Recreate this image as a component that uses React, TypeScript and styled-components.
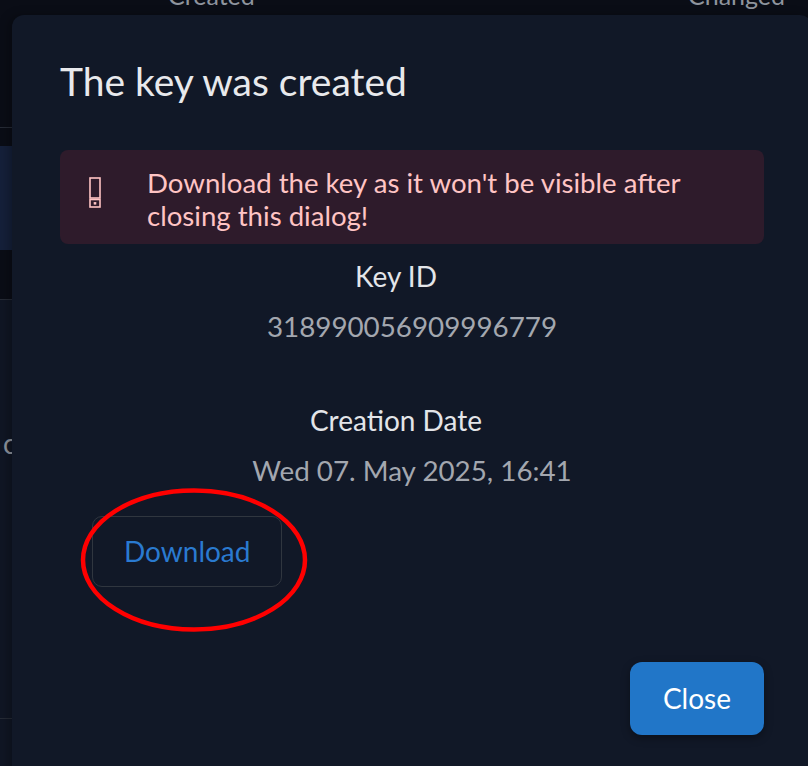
import React from 'react';
import styled, { createGlobalStyle } from 'styled-components';

const GlobalStyle = createGlobalStyle`
  html, body {
    margin: 0;
    padding: 0;
    background: #0a0d16;
    font-family: Lato, "Open Sans", "Liberation Sans", sans-serif;
  }
`;

const rows = [
  { height: 18, bg: '#0a0d16', line: false },
  { height: 104, bg: '#15203a', text: 'Selected', align: 'end' as const },
  { height: 50, bg: '#0a0d16', line: true },
  { height: 419, bg: '#101624', text: 'c', align: 'start' as const, line: true },
  { height: 120, bg: '#101624', text: 'o', align: 'start' as const },
];

const App: React.FC = () => {
  return (
    <>
      <GlobalStyle />
      <Page>
        <Table>
          <HeaderRow>
            <span />
            <HeaderCell>Created</HeaderCell>
            <HeaderCell>Changed</HeaderCell>
          </HeaderRow>
          {rows.map((r, i) => (
            <Row key={i} $height={r.height} $bg={r.bg} $line={!!r.line} $align={r.align}>
              {r.text && <RowText $strong={r.align === 'end'}>{r.text}</RowText>}
            </Row>
          ))}
        </Table>

        <Dialog role="dialog" aria-labelledby="dlg-title">
          <Title id="dlg-title">The key was created</Title>

          <Alert>
            <AlertIcon>
              <svg width="12" height="31" viewBox="0 0 12 31" fill="none" stroke="#ffc4c4" strokeWidth="1.6">
                <rect x="1" y="1" width="10" height="20" />
                <rect x="1" y="22.5" width="10" height="7.5" />
                <rect x="5" y="25.3" width="2" height="1.9" fill="#ffc4c4" strokeWidth="0.6" />
              </svg>
            </AlertIcon>
            <AlertText>Download the key as it won't be visible after closing this dialog!</AlertText>
          </Alert>

          <Details>
            <Label $first>Key ID</Label>
            <Value>318990056909996779</Value>
            <Label>Creation Date</Label>
            <Value>Wed 07. May 2025, 16:41</Value>
          </Details>

          <DownloadArea>
            <DownloadButton type="button">Download</DownloadButton>
            <Annotation width="232" height="148" viewBox="0 0 232 148">
              <ellipse cx="114" cy="72" rx="111" ry="69.5" fill="none" stroke="#ff0000" strokeWidth="4.5" />
            </Annotation>
          </DownloadArea>

          <Footer>
            <CloseButton type="button">Close</CloseButton>
          </Footer>
        </Dialog>
      </Page>
    </>
  );
};

const Page = styled.div`
  position: relative;
  height: 766px;
  overflow: hidden;
  background: #0a0d16;
`;

const Table = styled.div`
  display: flex;
  flex-direction: column;
  margin-top: -34px;
`;

const HeaderRow = styled.div`
  display: grid;
  grid-template-columns: 168px 520px 1fr;
  height: 162px;
  padding-top: 14px;
  box-sizing: border-box;
  border-bottom: 1px solid #262b36;
  background: #0a0d16;
`;

const HeaderCell = styled.span`
  font-size: 25px;
  line-height: 1.2;
  color: #8e949e;
`;

const Row = styled.div<{ $height: number; $bg: string; $line: boolean; $align?: 'start' | 'end' }>`
  display: flex;
  justify-content: ${(p) => (p.$align === 'end' ? 'flex-end' : 'flex-start')};
  align-items: flex-start;
  width: ${(p) => (p.$align === 'end' ? '14px' : 'auto')};
  min-width: ${(p) => (p.$align === 'end' ? '100%' : '0')};
  height: ${(p) => p.$height}px;
  box-sizing: border-box;
  padding: ${(p) => (p.$align === 'end' ? '22px 0 0' : p.$align === 'start' ? '127px 0 0 3px' : '0')};
  background: ${(p) => p.$bg};
  border-bottom: ${(p) => (p.$line ? '1px solid #262b36' : 'none')};
  white-space: nowrap;
`;

const RowText = styled.span<{ $strong?: boolean }>`
  font-size: 28px;
  line-height: 1.2;
  color: ${(p) => (p.$strong ? '#c9ccd2' : '#8e949e')};
  margin-left: ${(p) => (p.$strong ? '-110px' : '0')};
`;

const Dialog = styled.section`
  position: absolute;
  top: 15px;
  left: 12px;
  width: 800px;
  bottom: -40px;
  box-sizing: border-box;
  padding: 43px 48px 0;
  background: #111827;
  border-radius: 12px;
  box-shadow: -4px 0 10px rgba(0, 0, 0, 0.25);
  display: flex;
  flex-direction: column;
`;

const Title = styled.h2`
  margin: 0;
  font-size: 39px;
  font-weight: 400;
  line-height: 1.2;
  color: #e8e9ec;
`;

const Alert = styled.div`
  display: flex;
  align-items: flex-start;
  margin-top: 45px;
  padding: 16px 20px 12px 29px;
  background: #2e1b2b;
  border-radius: 8px;
`;

const AlertIcon = styled.span`
  display: flex;
  width: 58px;
  flex: none;
  padding-top: 11px;
`;

const AlertText = styled.p`
  margin: 0;
  font-size: 27.6px;
  line-height: 1.2;
  color: #ffc4c4;
`;

const Details = styled.div`
  display: flex;
  flex-direction: column;
  align-items: center;
  text-align: center;
`;

const Label = styled.div<{ $first?: boolean }>`
  margin-top: ${(p) => (p.$first ? '16px' : '61px')};
  padding-right: 32px;
  font-size: 28px;
  line-height: 1.2;
  color: #e3e5e9;
`;

const Value = styled.div`
  margin-top: 16px;
  font-size: 27.8px;
  line-height: 1.2;
  color: #a3a7af;
`;

const DownloadArea = styled.div`
  position: relative;
  align-self: flex-start;
  margin: 29px 0 0 32px;
`;

const DownloadButton = styled.button`
  display: block;
  padding: 18px 31px;
  font-family: inherit;
  font-size: 28px;
  line-height: 1.2;
  color: #2a7ad0;
  background: transparent;
  border: 1.5px solid #30363f;
  border-radius: 10px;
  cursor: pointer;
`;

const Annotation = styled.svg`
  position: absolute;
  left: -12px;
  top: -28px;
  pointer-events: none;
`;

const Footer = styled.div`
  display: flex;
  justify-content: flex-end;
  margin-top: 75px;
`;

const CloseButton = styled.button`
  padding: 19.5px 33px;
  font-family: inherit;
  font-size: 28px;
  line-height: 1.2;
  color: #ffffff;
  background: #2176c8;
  border: none;
  border-radius: 12px;
  box-shadow: 0 3px 8px rgba(0, 0, 0, 0.35);
  cursor: pointer;
`;

export default App;
